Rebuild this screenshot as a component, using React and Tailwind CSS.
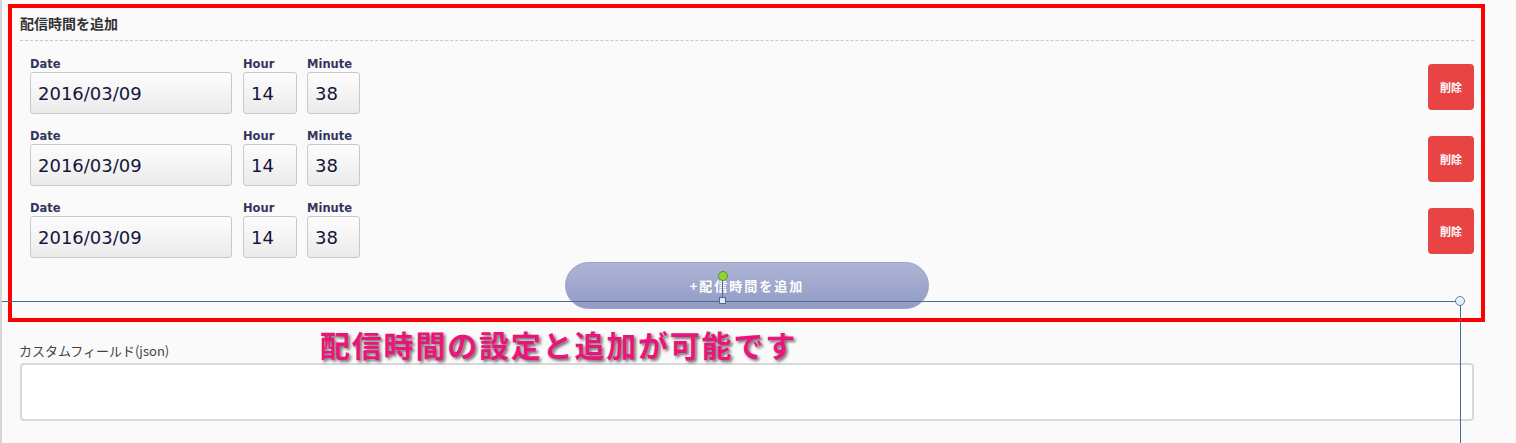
import React from 'react';

const jp = { fontFamily: '"DejaVu Sans", "Noto Sans CJK JP", sans-serif' };
const cjk = { fontFamily: '"Noto Sans CJK JP", "DejaVu Sans", sans-serif' };

const rows = [
  { date: '2016/03/09', hour: '14', minute: '38' },
  { date: '2016/03/09', hour: '14', minute: '38' },
  { date: '2016/03/09', hour: '14', minute: '38' },
];

function Field({ label, value, width, className = '' }) {
  return (
    <div className={`flex flex-col ${width} ${className}`}>
      <span className="text-[11.5px] font-bold leading-[16px] text-[#34345a]" style={jp}>{label}</span>
      <div className="h-[42px] flex items-center pl-[7px] rounded-[3px] border border-[#c9c9c9] bg-linear-to-b from-[#fdfdfd] to-[#ebebeb] text-[18px] text-[#15153c]" style={jp}>
        {value}
      </div>
    </div>
  );
}

export default function App() {
  return (
    <div className="relative w-[1516px] h-[443px] overflow-hidden bg-[#fafafa] border-l-2 border-[#d5d5d5]">
      {/* 配信時間 block, framed in red */}
      <div className="pt-[4px] pl-[6px]">
        <div className="w-[1477px] h-[318px] border-4 border-[#ff0000] pl-2 pr-[7px] pt-[5px]">
          <h3 className="text-[14px] font-bold leading-[20px] text-[#333]" style={cjk}>配信時間を追加</h3>
          <div className="mt-[7px] border-t border-dashed border-[#c8c8c8]" />

          <div className="mt-[15px] flex flex-col gap-[14px]">
            {rows.map((r, i) => (
              <div key={i} className="flex pl-[10px]">
                <Field label="Date" value={r.date} width="w-[202px]" />
                <Field label="Hour" value={r.hour} width="w-[54px]" className="ml-[11px]" />
                <Field label="Minute" value={r.minute} width="w-[53px]" className="ml-[10px]" />
                <button className="ml-auto mt-[8px] w-[46px] h-[46px] rounded-[4px] bg-[#e84444] text-white text-[11px] font-bold" style={cjk}>
                  削除
                </button>
              </div>
            ))}
          </div>

          <button className="block mx-auto mt-[4px] w-[364px] h-[47px] rounded-full border border-[#9aa2c8] bg-linear-to-b from-[#adb4d5] to-[#929bc5] text-white text-[13px] font-bold tracking-[2px]" style={cjk}>
            +配信時間を追加
          </button>
        </div>
      </div>

      {/* カスタムフィールド */}
      <div className="pt-[20px] pl-[17px]">
        <div className="text-[13px] leading-[18px] text-[#444]" style={cjk}>カスタムフィールド(json)</div>
        <div className="ml-px mt-[3px] w-[1454px] h-[58px] rounded-[4px] border-2 border-[#d8d8d8] bg-white" />
      </div>

      {/* annotation overlay */}
      <div
        className="absolute left-[318px] top-[326px] text-[30px] leading-[36px] font-bold tracking-[1.8px] text-[#e8167b] [text-shadow:2px_2px_3px_rgba(0,0,0,0.55)]"
        style={cjk}
      >
        配信時間の設定と追加が可能です
      </div>

      {/* connector lines */}
      <div className="absolute left-0 top-[301px] w-[1460px] h-px bg-[#4e6a8e]" />
      <div className="absolute left-[1458px] top-[301px] bottom-0 w-px bg-[#4e6a8e]" />
      <div className="absolute left-[1453px] top-[296px] w-[10px] h-[10px] rounded-full border border-[#6b7f99] bg-linear-to-b from-[#f4f9ff] to-[#cfe6fb]" />
      <div className="absolute left-[720px] top-[280px] w-px h-[19px] bg-[#4e6a8e]" />
      <div className="absolute left-[716px] top-[271px] w-[10px] h-[10px] rounded-full border border-[#5d8a2e] bg-[#8ed33a]" />
      <div className="absolute left-[717px] top-[297px] w-[7px] h-[7px] border border-[#4e6a8e] bg-[#dcecfb]" />
    </div>
  );
}
